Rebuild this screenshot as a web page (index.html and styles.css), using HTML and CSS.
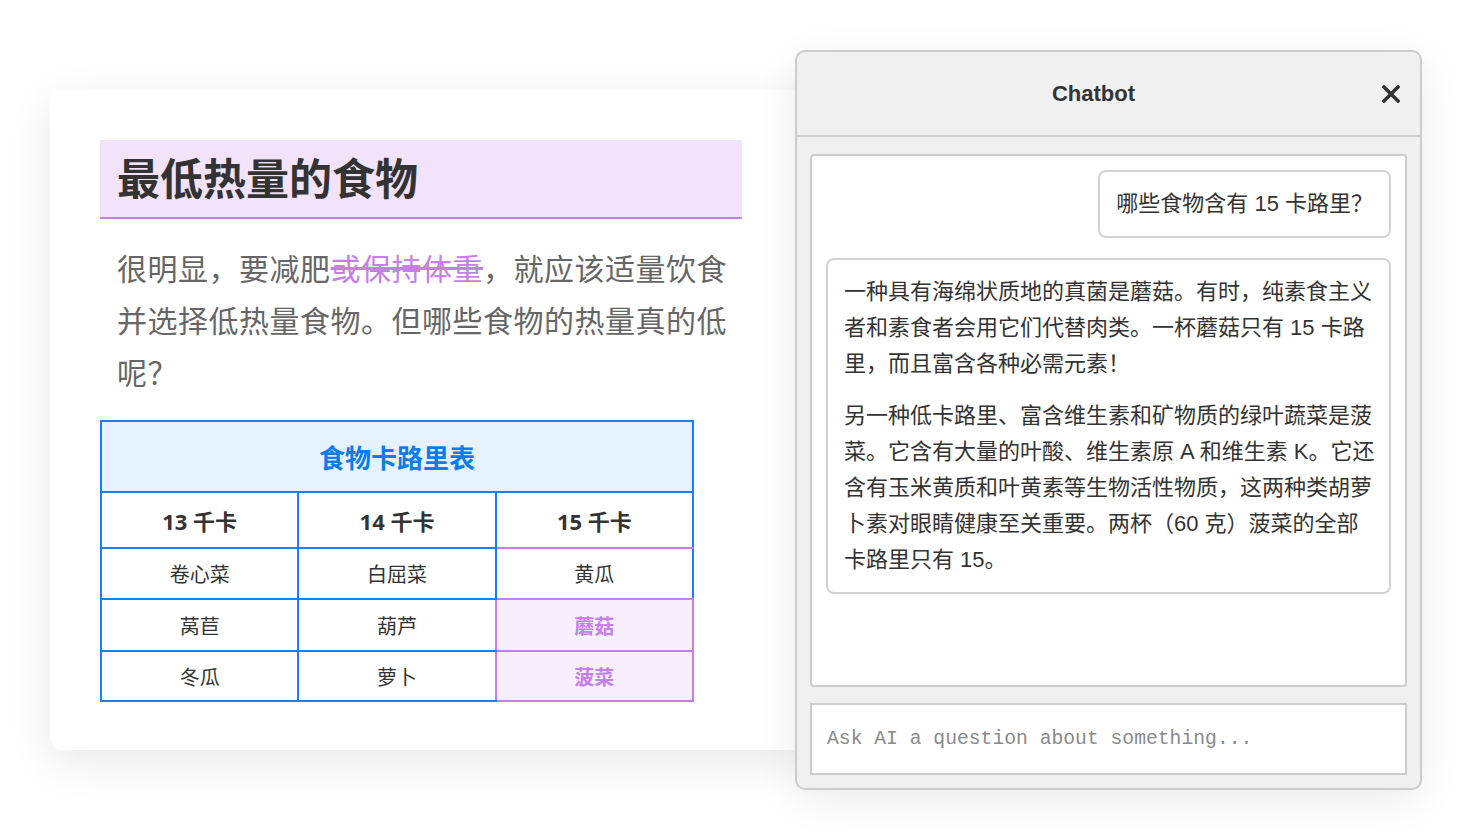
FILE: index.html
```html
<!DOCTYPE html>
<html lang="zh">
<head>
<meta charset="utf-8">
<title>最低热量的食物</title>
<link rel="stylesheet" href="styles.css">
</head>
<body>
<div class="stage">
  <article class="card">
    <h1 class="title">最低热量的食物</h1>
    <p class="intro">很明显，要减肥<del class="strike">或保持体重</del>，就应该适量饮食并选择低热量食物。但哪些食物的热量真的低呢？</p>
    <table class="cal">
      <thead>
        <tr class="cap-row"><th colspan="3" class="cap">食物卡路里表</th></tr>
        <tr class="head-row"><th>13 千卡</th><th>14 千卡</th><th class="pb">15 千卡</th></tr>
      </thead>
      <tbody>
        <tr class="r1"><td>卷心菜</td><td>白屈菜</td><td class="pb">黄瓜</td></tr>
        <tr class="r2"><td>莴苣</td><td class="pr">葫芦</td><td class="hl">蘑菇</td></tr>
        <tr class="r3"><td>冬瓜</td><td class="pr">萝卜</td><td class="hl">菠菜</td></tr>
      </tbody>
    </table>
  </article>

  <section class="chat">
    <header class="chat-head">
      <div class="chat-title">Chatbot</div>
      <button class="close" aria-label="close">
        <svg width="18" height="18" viewBox="0 0 18 18"><path d="M2 2 L16 16 M16 2 L2 16" stroke="#333" stroke-width="3.6" stroke-linecap="square" fill="none"/></svg>
      </button>
    </header>
    <div class="msgs">
      <div class="row-user"><div class="bubble user">哪些食物含有 15 卡路里？</div></div>
      <div class="bubble bot">
        <p>一种具有海绵状质地的真菌是蘑菇。有时，纯素食主义者和素食者会用它们代替肉类。一杯蘑菇只有 15 卡路里，而且富含各种必需元素！</p>
        <p>另一种低卡路里、富含维生素和矿物质的绿叶蔬菜是菠菜。它含有大量的叶酸、维生素原 A 和维生素 K。它还含有玉米黄质和叶黄素等生物活性物质，这两种类胡萝卜素对眼睛健康至关重要。两杯（60 克）菠菜的全部卡路里只有 15。</p>
      </div>
    </div>
    <input class="ask" type="text" placeholder="Ask AI a question about something...">
  </section>
</div>
</body>
</html>
```

FILE: styles.css
```css
* { box-sizing: border-box; }
html, body { margin: 0; padding: 0; background: #ffffff; }
body { width: 1472px; height: 840px; overflow: hidden; text-spacing-trim: space-all; text-autospace: no-autospace; }

.stage { position: relative; width: 1472px; height: 840px; padding: 90px 0 0 50px; }

.card {
  width: 760px;
  height: 660px;
  background: #fff;
  border-radius: 12px;
  box-shadow: 0 12px 45px rgba(0,0,0,0.09);
  padding: 50px 0 0 50px;
  font-family: "Noto Sans", "Noto Sans CJK SC", sans-serif;
}

.title {
  width: 642px;
  margin: 0;
  padding: 10px 17px;
  background: #f3e3fa;
  border-bottom: 2px solid #c67eea;
  font-size: 43px;
  line-height: 57px;
  font-weight: 700;
  color: #333;
}

.intro {
  width: 642px;
  margin: 22px 0 0;
  padding: 0 0 0 17px;
  font-family: "Noto Sans CJK SC", sans-serif;
  font-size: 30px;
  letter-spacing: 0.5px;
  line-height: 52px;
  color: #666;
}
.strike { color: #c67eea; text-decoration: line-through; text-decoration-color: #c67eea; }

.cal {
  margin-top: 23px;
  width: 594px;
  border-collapse: collapse;
  table-layout: fixed;
  color: #333;
  text-align: center;
}
.cal th, .cal td { border: 2px solid #1a7ff0; padding: 0; }
.cap-row { height: 71px; }
.cap { background: #e6f2ff; color: #0a7cf0; font-size: 26px; font-weight: 700; }
.head-row { height: 56px; }
.head-row th { font-size: 22px; font-weight: 700; }
.r1 { height: 51px; }
.r2 { height: 52px; }
.r3 { height: 50px; }
.cal td { font-size: 20px; }
.cal .pb { border-bottom-color: #c67eea; }
.cal .pr { border-right-color: #c67eea; }
.cal .hl { background: #f8effd; border-color: #c67eea; color: #c67eea; font-weight: 700; }

.chat {
  position: absolute;
  left: 795px;
  top: 50px;
  width: 627px;
  height: 740px;
  background: #f0f0f0;
  border: 2px solid #cccccc;
  border-radius: 10px;
  box-shadow: 0 10px 40px rgba(0,0,0,0.08);
  display: flex;
  flex-direction: column;
  padding-bottom: 13px;
  font-family: "Liberation Sans", "Noto Sans CJK SC", sans-serif;
  color: #333;
}

.chat-head {
  height: 85px;
  flex: none;
  display: flex;
  align-items: center;
  padding: 0 20px;
  border-bottom: 2px solid #cccccc;
}
.chat-title { flex: 1; text-align: center; font-size: 22px; font-weight: 700; color: #333; }
.close {
  width: 30px; height: 30px;
  border: 0; background: none; padding: 0;
  display: flex; align-items: center; justify-content: flex-end;
}

.msgs {
  flex: 1;
  margin: 17px 13px 0;
  background: #fff;
  border: 2px solid #cccccc;
  border-radius: 4px;
  padding: 14px;
  display: flex;
  flex-direction: column;
  gap: 20px;
}
.row-user { display: flex; justify-content: flex-end; }
.bubble {
  border: 2px solid #d2d2d2;
  border-radius: 8px;
  padding: 14px 16px;
  font-size: 22px;
  line-height: 36px;
  color: #333;
  background: #fff;
}
.bot { padding-right: 14px; }
.bot p { margin: 0; }
.bot p + p { margin-top: 16px; }

.ask {
  flex: none;
  margin: 16px 13px 0;
  height: 72px;
  border: 2px solid #cccccc;
  background: #fff;
  padding: 0 15px;
  font-family: "Liberation Mono", monospace;
  font-size: 19.7px;
  color: #333;
  outline: none;
}
.ask::placeholder { color: #8a8a8a; }
```
